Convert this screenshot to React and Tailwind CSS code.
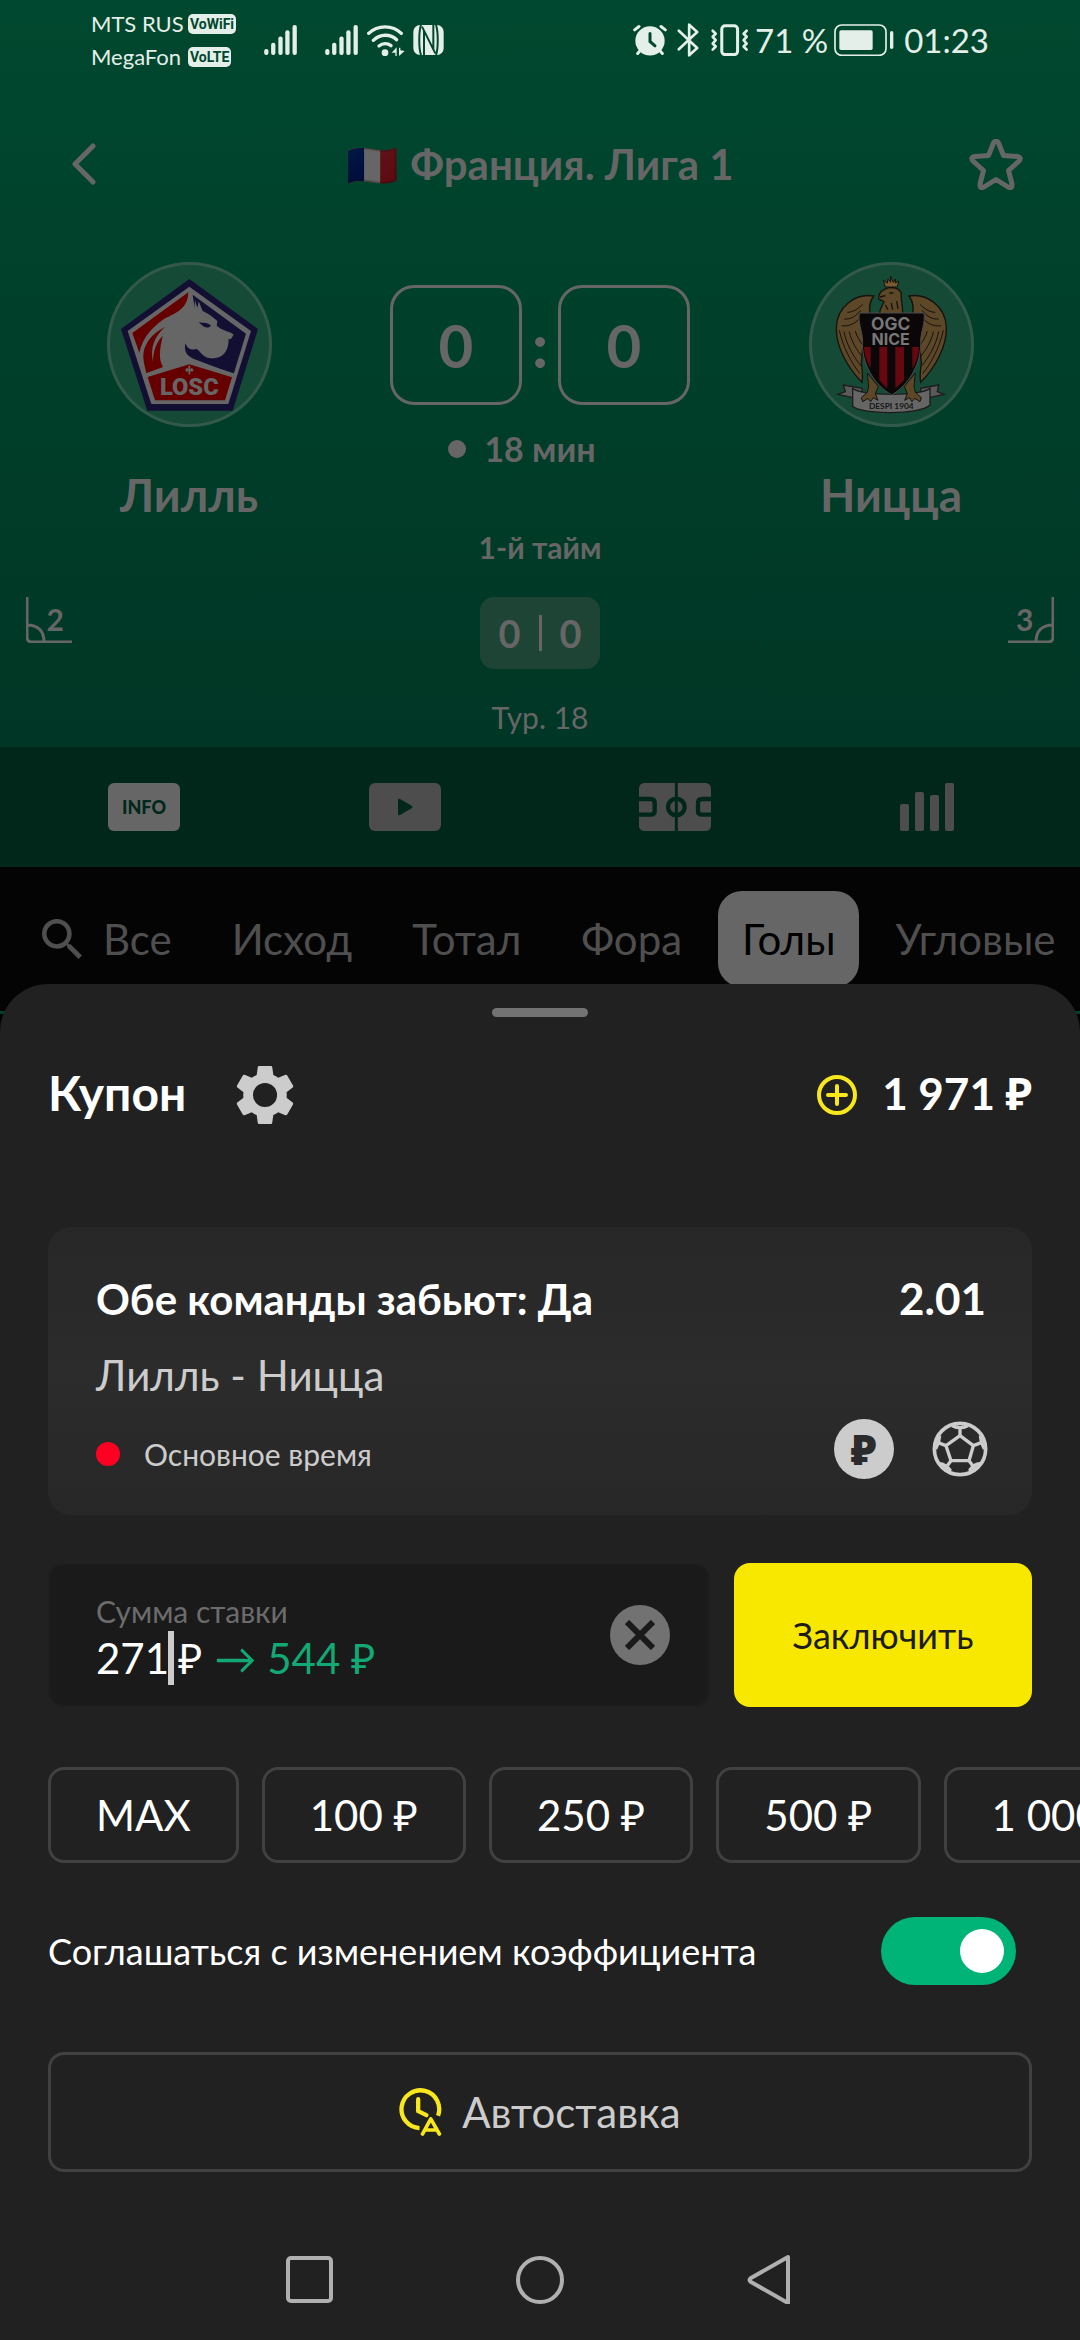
import { useState } from 'react';

const TABS = ['Исход', 'Тотал', 'Фора', 'Голы', 'Угловые'];
const AMOUNTS = ['MAX', '100 ₽', '250 ₽', '500 ₽', '1 000 ₽'];

const Signal = () => (
    <svg className="w-[33px] h-[30px]" viewBox="611 74 99 91" fill="currentColor">
        <rect x="611" y="147" width="13" height="18" rx="6" />
        <rect x="632" y="128" width="13" height="37" rx="6" />
        <rect x="654" y="109" width="13" height="56" rx="6" />
        <rect x="675" y="90" width="13" height="75" rx="6" />
        <rect x="697" y="74" width="13" height="91" rx="6" />
    </svg>
);

const NetworkBadge = ({ children }) => (
    <span className="justify-self-start rounded-[5px] bg-[#e4efe9] px-[2px] text-[14px] leading-5 font-bold text-[#00472e] font-['Roboto',sans-serif]">{children}</span>
);

const StatusBar = () => (
    <div className="flex items-center justify-between h-20 px-[91px] text-[#e4efe9]">
        <div className="flex items-center">
            <div className="grid grid-cols-[97px_76px] items-center text-[22px] leading-[33px]">
                <span className="whitespace-nowrap">MTS RUS</span>
                <NetworkBadge>VoWiFi</NetworkBadge>
                <span>MegaFon</span>
                <NetworkBadge>VoLTE</NetworkBadge>
            </div>
            <Signal />
            <div className="w-7" />
            <Signal />
            {/* Wi-Fi with traffic arrows */}
            <svg className="w-[38px] h-[31px] ml-[9px]" viewBox="921 73 114 93" fill="none" stroke="currentColor" strokeWidth="10" strokeLinecap="round">
                <path d="M926 98 C953 72 998 72 1024 98" />
                <path d="M940 119 C960 99 991 99 1010 117" />
                <path d="M957 136 C968 127 983 127 993 135" />
                <circle cx="975" cy="156" r="10" fill="currentColor" stroke="none" />
                <path d="M1010 140 V166 H1006 V156 H995 Z M1017 166 V141 H1021 V149 L1034 151 Z" fill="currentColor" stroke="none" />
            </svg>
            {/* NFC */}
            <svg className="w-[31px] h-[30px] ml-2" viewBox="1057 75 91 90" fill="none" stroke="#00472e" strokeWidth="6">
                <rect x="1057" y="75" width="91" height="90" rx="20" fill="currentColor" className="text-[#e4efe9]" stroke="none" />
                <path d="M1080 75 C1073 95 1073 145 1080 165 M1125 75 C1132 95 1132 145 1125 165" />
                <path d="M1089 165 V92 L1117 148 V75 M1083 80 L1089 92 M1117 148 L1123 160" />
            </svg>
        </div>
        <div className="flex items-center text-[33px] leading-[42px]">
            {/* Alarm */}
            <svg className="w-[34px] h-8" viewBox="96 73 102 95" fill="none" stroke="currentColor" strokeWidth="9" strokeLinecap="round">
                <circle cx="147" cy="123" r="44" fill="currentColor" stroke="none" />
                <path d="M101 90 L114 80 M180 80 L193 90 M117 153 L110 161 M177 153 L184 161" />
                <path d="M147 101 V125 L162 138" stroke="#00472e" />
            </svg>
            {/* Bluetooth */}
            <svg className="w-[22px] h-[34px] ml-[10px]" viewBox="229 69 65 102" fill="none" stroke="currentColor" strokeWidth="8" strokeLinejoin="round" strokeLinecap="round">
                <path d="M234 92 L289 144 L265 166 V74 L289 96 L234 148" />
            </svg>
            {/* Vibration */}
            <svg className="w-[39px] h-8 ml-[11px]" viewBox="326 72 116 95" fill="none" stroke="currentColor" strokeWidth="9" strokeLinejoin="round" strokeLinecap="round">
                <rect x="361" y="77" width="47" height="86" rx="10" />
                <path d="M334 92 L343 101 L334 110 L343 120 L334 130 L343 139 L334 148" strokeWidth="8" />
                <path d="M435 92 L426 101 L435 110 L426 120 L435 130 L426 139 L435 148" strokeWidth="8" />
            </svg>
            <span className="ml-[6px] whitespace-nowrap">71 %</span>
            <svg className="w-[60px] h-8 ml-[6px]" viewBox="704 73 180 96" fill="none" stroke="currentColor">
                <rect x="707" y="76" width="153" height="91" rx="20" strokeWidth="5" />
                <rect x="720" y="92" width="100" height="59" rx="5" fill="currentColor" stroke="none" />
                <path d="M877 99 V143" strokeWidth="10" strokeLinecap="round" />
            </svg>
            <span className="ml-[10px]">01:23</span>
        </div>
    </div>
);

const LilleLogo = () => (
    <svg className="w-full h-full" viewBox="81 67 495 495" role="img" aria-label="Лилль">
        <path d="M328 118 L534 268 L458 513 H202 L123 268 Z" fill="#120f33" />
        <path d="M328 141 L513 274 L445 493 H214 L143 274 Z" fill="#666" />
        <path d="M325 158 L157 280 L178 340 C188 292 218 262 252 238 C290 220 324 206 325 158 Z" fill="#660000" />
        <path d="M256 261 C212 282 188 320 190 352 C191 372 196 386 199 401 L249 382 C234 356 240 326 248 288 C228 310 220 332 219 366 C210 326 222 290 256 261 Z" fill="#660000" />
        <path d="M338 165 L498 282 L461 403 L340 357 C322 350 311 336 316 311 C320 322 330 334 346 328 C360 328 364 354 392 356 C424 358 446 340 446 298 L453 298 L461 285 C450 274 428 274 410 258 L412 244 C398 232 384 221 368 214 L356 186 L352 210 L344 206 Z" fill="#120f33" />
        <path d="M345 182 L343 208 L366 214 L357 188 L352 204 Z" fill="#666" />
        <path d="M356 247 C370 252 382 246 393 258 C386 267 372 266 356 247 Z" fill="#120f33" />
        <path d="M328 374 L456 413 L435 482 H225 L203 412 Z" fill="#660000" />
        <path d="M199 406 L328 364 L462 406" fill="none" stroke="#666" strokeWidth="10" />
        <path d="M328 378 V404 M316 391 H340 M321 386 V396 M335 386 V396" fill="none" stroke="#666" strokeWidth="5" />
        <text x="328" y="466" textAnchor="middle" fontSize="71" fontWeight="900" fill="#666" fontFamily="Roboto, sans-serif">LOSC</text>
    </svg>
);

const Wing = () => (
    <g stroke="#17110b" strokeWidth="4" fill="#5c4729">
        <path d="M641 169 C588 160 530 200 529 265 C528 320 562 384 606 428 C610 405 606 388 604 370 L612 280 L600 222 H630 C626 200 630 184 641 169 Z" />
        <path d="M538 272 C548 320 575 372 600 402 M552 276 C560 318 582 352 602 378 M568 276 C574 306 590 330 606 350 M586 274 C590 290 600 306 610 318 M545 258 C566 262 590 250 602 232 M552 238 C572 240 590 228 602 212 M562 218 C580 218 596 206 608 194" fill="none" strokeWidth="3" />
    </g>
);

const NiceLogo = () => (
    <svg className="w-full h-full" viewBox="447 67 495 495" role="img" aria-label="Ницца">
        {/* Ribbon */}
        <path d="M550 436 L606 446 V476 L578 474 L534 464 L556 456 Z M836 436 L782 446 V476 L808 474 L852 464 L832 456 Z" fill="#5a5a5a" stroke="#1c1c1c" strokeWidth="4" />
        <path d="M578 446 C606 470 782 470 810 446 V496 C782 526 606 526 578 500 Z" fill="#666" stroke="#1c1c1c" strokeWidth="4" />
        {/* Legs */}
        <path d="M622 400 L655 440 L646 462 L654 482 L640 474 L632 486 L624 476 L608 486 L604 474 L622 458 L626 440 Z M766 400 L733 440 L742 462 L734 482 L748 474 L756 486 L764 476 L780 486 L784 474 L766 458 L762 440 Z" fill="#5c4729" stroke="#17110b" strokeWidth="3" />
        <Wing />
        <g transform="matrix(-1 0 0 1 1388 0)">
            <Wing />
        </g>
        {/* Head and crown */}
        <path d="M658 222 C660 206 668 196 672 186 L656 178 C654 164 664 152 676 148 C696 138 722 146 724 164 C722 178 728 196 728 222 Z" fill="#5c4729" stroke="#17110b" strokeWidth="4" />
        <path d="M660 172 L676 168 M688 160 H700 M676 196 L684 210 M694 190 L698 210 M710 184 L714 208" fill="none" stroke="#17110b" strokeWidth="4" />
        <path d="M676 142 L670 122 L682 130 L684 118 L692 128 V110 L700 128 L706 118 L706 130 L716 124 L712 142 Z" fill="#7a5a30" stroke="#17110b" strokeWidth="3" />
        {/* Shield */}
        <path d="M598 220 H792 C796 250 784 274 782 300 C786 372 746 436 695 466 C644 436 602 372 608 300 C606 274 594 250 598 220 Z" fill="#0b0708" stroke="#4a4a4a" strokeWidth="3" />
        <path d="M612 322 H632 V386 C620 366 613 346 612 322 Z M658 322 H682 V446 C673 438 665 430 658 421 Z M706 322 H732 V421 C724 430 716 438 706 445 Z M757 322 H777 C776 346 769 368 757 388 Z" fill="#660810" />
        <text x="692" y="271" textAnchor="middle" fontSize="52" fontWeight="700" fill="#777" fontFamily="Inter, sans-serif">OGC</text>
        <text x="692" y="316" textAnchor="middle" fontSize="48" fontWeight="700" fill="#777" fontFamily="Inter, sans-serif">NICE</text>
        <text x="694" y="507" textAnchor="middle" fontSize="25" fontWeight="700" fill="#151515" fontFamily="Lato, sans-serif">DESPI 1904</text>
    </svg>
);

const Corner = () => (
    <svg className="w-full h-full" viewBox="0 0 46 46" fill="none" stroke="currentColor" strokeWidth="3">
        <path d="M1 0 V40 Q1 45 6 45 H46 M1 28 C12 28 18 34 18 45" />
    </svg>
);

const Team = ({ name, corners, logo, flip }) => (
    <div className="flex flex-col items-center">
        <div className="w-[165px] h-[165px] rounded-full bg-[#154a37] outline-3 -outline-offset-3 outline-[#33594a]">
            {logo}
        </div>
        <p className="mt-10 text-[46px] leading-[56px] font-bold">{name}</p>
        <div className={flip ? 'relative mt-[74px] mr-[26px] self-end w-[46px] h-[46px]' : 'relative mt-[74px] ml-[26px] self-start w-[46px] h-[46px]'}>
            <div className={flip ? 'absolute inset-0 -scale-x-100' : 'absolute inset-0'}>
                <Corner />
            </div>
            <span className={flip ? 'absolute left-2 top-1 text-[30px] leading-9 font-bold' : 'absolute right-2 top-1 text-[30px] leading-9 font-bold'}>{corners}</span>
        </div>
    </div>
);

const ScoreBox = ({ value }) => (
    <span className="flex items-center justify-center w-[132px] h-[120px] rounded-3xl border-3 border-[#666] text-[60px] leading-[60px] font-bold">{value}</span>
);

const MatchHeader = () => (
    <header className="bg-linear-to-b from-[#00482f] to-[#003625] text-[#666]">
        <StatusBar />
        <div className="flex items-center justify-between h-12 mt-[60px] px-[57px]">
            <button aria-label="Назад" className="w-[54px] pl-[15px]">
                <svg className="w-6 h-[42px]" viewBox="0 0 24 42" fill="none" stroke="currentColor" strokeWidth="5" strokeLinecap="round" strokeLinejoin="round">
                    <path d="M21 3 L3 21 L21 39" />
                </svg>
            </button>
            <h1 className="flex items-center gap-3 text-[42px] leading-[48px] font-bold">
                <span className="brightness-40">🇫🇷</span>
                Франция. Лига 1
            </h1>
            <button aria-label="В избранное">
                <svg className="w-[54px] h-[51px]" viewBox="0 0 54 51" fill="none" stroke="currentColor" strokeWidth="5" strokeLinejoin="round">
                    <path d="M24.5 4 Q27 0 29.500 4 L34.500 16.500 L48.500 17.500 Q53 18.500 50 22 L39.500 31.500 L43 45 Q43.500 50 39 48 L27 40.500 L15 48 Q10.500 50 11 45 L14.500 31.500 L4 22 Q1 18.500 5.500 17.500 L19.500 16.500 Z" />
                </svg>
            </button>
        </div>

        <div className="grid grid-cols-[7fr_6fr_7fr] pt-[74px] pb-3">
            <Team name="Лилль" corners="2" logo={<LilleLogo />} />
            <div className="flex flex-col items-center pt-[23px]">
                <div className="flex items-center">
                    <ScoreBox value="0" />
                    <span className="w-9 text-center text-[60px] leading-[60px] font-black">:</span>
                    <ScoreBox value="0" />
                </div>
                <p className="flex items-center gap-[18px] mt-[22px] pr-9 text-[34px] leading-[44px] font-bold">
                    <span className="w-[18px] h-[18px] rounded-full bg-[#666]" />
                    18 мин
                </p>
                <p className="mt-[58px] text-[30px] leading-9 font-bold">1-й тайм</p>
                <div className="flex items-center gap-[18px] mt-8 h-[72px] px-[18px] rounded-[14px] bg-[#1e4436] text-[38px] leading-9 font-bold">
                    <span>0</span>
                    <span className="w-[3px] h-9 bg-[#666]" />
                    <span>0</span>
                </div>
                <p className="mt-[30px] text-[30px] leading-9">Тур. 18</p>
            </div>
            <Team name="Ницца" corners="3" logo={<NiceLogo />} flip />
        </div>
    </header>
);

const MediaBar = () => (
    <nav className="grid grid-cols-2 h-[120px] bg-[#00271a] text-[#4d4d4d]">
        <div className="flex items-center justify-between pl-[108px] pr-[99px]">
            <button className="w-[72px] h-12 rounded-md bg-[#666] text-[18px] leading-5 font-black text-[#00271a]">INFO</button>
            <button aria-label="Видео" className="flex items-center justify-center w-[72px] h-12 rounded-md bg-[#4d4d4d]">
                <svg className="w-[18px] h-[18px]" viewBox="0 0 18 18" fill="#00271a">
                    <path d="M2 2 Q2 0 4 1 L16 8 Q17 9 16 10 L4 17 Q2 18 2 16 Z" />
                </svg>
            </button>
        </div>
        <div className="flex items-center justify-between pl-[99px] pr-[126px]">
            <button aria-label="Поле">
                <svg className="w-[72px] h-12" viewBox="27 39 216 144">
                    <rect x="27" y="39" width="216" height="144" rx="16" fill="currentColor" />
                    <g fill="none" stroke="#00271a">
                        <path d="M27 87 H62 Q74 87 74 99 V123 Q74 134 62 134 H27 M243 87 H216 Q204 87 204 99 V123 Q204 134 216 134 H243" strokeWidth="13" />
                        <path d="M139 39 V183" strokeWidth="9" />
                        <circle cx="139" cy="111" r="25" strokeWidth="13" />
                    </g>
                </svg>
            </button>
            <button aria-label="Статистика">
                <svg className="w-[54px] h-12" viewBox="0 0 54 48" fill="currentColor">
                    <rect y="21" width="9" height="27" rx="2" />
                    <rect x="15" y="9" width="9" height="39" rx="2" />
                    <rect x="30" y="12" width="9" height="36" rx="2" />
                    <rect x="45" width="9" height="48" rx="2" />
                </svg>
            </button>
        </div>
    </nav>
);

const MarketTabs = () => {
    const [active, setActive] = useState('Голы');

    return (
        <div className="flex gap-3 h-[147px] pt-6 pl-[42px] border-b-3 border-[#00402b] bg-[#040404] overflow-hidden text-[42px] leading-[48px] text-[#4f4f4f]">
            <button className="flex items-center gap-[21px] h-24 pr-6 shrink-0">
                <svg className="w-10 h-10" viewBox="3 3 17.5 17.5" fill="currentColor">
                    <path d="M15.5 14h-.79l-.28-.27C15.41 12.59 16 11.11 16 9.5 16 5.91 13.09 3 9.5 3S3 5.91 3 9.5 5.91 16 9.5 16c1.61 0 3.09-.59 4.23-1.57l.27.28v.79l5 4.99L20.49 19l-4.99-5zm-6 0C7.01 14 5 11.99 5 9.5S7.01 5 9.5 5 14 7.01 14 9.5 11.99 14 9.5 14z" />
                </svg>
                Все
            </button>
            {TABS.map((tab) => (
                <button
                    key={tab}
                    onClick={() => setActive(tab)}
                    className={tab === active ? 'h-24 px-6 shrink-0 rounded-3xl bg-[#666] text-black' : 'h-24 px-6 shrink-0'}
                >
                    {tab}
                </button>
            ))}
        </div>
    );
};

const BetCard = () => (
    <article className="mt-[102px] mx-12 pt-[45px] pb-9 pl-12 pr-[42px] rounded-3xl bg-linear-to-b from-[#272727] via-[#2c2c2c] to-[#272727]">
        <div className="flex items-baseline justify-between h-[51px] font-bold">
            <h3 className="text-[42px] leading-[54px]">Обе команды забьют: Да</h3>
            <span className="pr-1 text-[44px] leading-[48px]">2.01</span>
        </div>
        <p className="mt-7 text-[42px] leading-[48px] text-[#ccc]">Лилль - Ницца</p>
        <div className="flex items-center justify-between mt-5">
            <p className="flex items-center gap-6 pt-[10px] text-[30px] leading-9 text-[#ccc]">
                <span className="w-6 h-6 rounded-full bg-[#ff0022]" />
                Основное время
            </p>
            <div className="flex items-center gap-9">
                <span className="flex items-center justify-center w-[60px] h-[60px] rounded-full bg-[#ccc] text-[42px] leading-[48px] font-black text-[#2b2b2b]">₽</span>
                <svg className="w-[60px] h-[60px]" viewBox="330 42 180 180" fill="none" stroke="#ccc" strokeWidth="10" strokeLinejoin="round">
                    <circle cx="420" cy="132" r="77" strokeWidth="11" />
                    <path d="M420 92 L460 122 L447 167 H393 L378 122 Z" />
                    <path d="M420 92 V66 M460 122 L486 112 M447 167 L464 190 M393 167 L376 190 M378 122 L352 112" />
                    <path d="M397 62 Q420 74 443 62 M481 92 Q482 112 493 132 M480 176 Q462 176 448 198 M392 198 Q378 178 360 176 M347 132 Q358 112 359 92" />
                </svg>
            </div>
        </div>
    </article>
);

const StakeForm = () => {
    const [stake, setStake] = useState('271');

    return (
        <div className="flex gap-6 mt-12 mx-12">
            <div className="flex flex-1 items-center justify-between h-36 pl-[46px] pr-[38px] rounded-2xl border-2 border-[#1e1e1e] bg-[#1a1a1a]">
                <div className="pt-2">
                    <label htmlFor="stake" className="block text-[30px] leading-9 text-[#6c6c6c]">Сумма ставки</label>
                    <div className="flex items-center mt-[2px] text-[42px] leading-[54px]">
                        <input
                            id="stake"
                            value={stake}
                            onChange={(e) => setStake(e.target.value)}
                            className="w-[72px] h-[54px] bg-transparent text-white outline-none"
                        />
                        <span className="w-[6px] h-[54px] bg-[#ccc]" />
                        <span className="ml-1">₽</span>
                        <span className="ml-3 text-[#12a975]">→ 544 ₽</span>
                    </div>
                </div>
                <button aria-label="Очистить" onClick={() => setStake('')} className="flex items-center justify-center w-[60px] h-[60px] rounded-full bg-[#727272]">
                    <svg className="w-[30px] h-[30px]" viewBox="0 0 30 30" fill="none" stroke="#1a1a1a" strokeWidth="6">
                        <path d="M2 2 L28 28 M28 2 L2 28" />
                    </svg>
                </button>
            </div>
            <button className="w-[298px] h-36 rounded-2xl bg-[#f8e800] text-[36px] leading-[44px] text-[#1c1c1c]">Заключить</button>
        </div>
    );
};

const Coupon = () => (
    <section className="relative flex-1 -mt-[30px] pt-6 rounded-t-[48px] bg-[#212121] text-white overflow-hidden">
        <div className="w-24 h-[9px] mx-auto rounded-full bg-[#737373]" />

        <div className="flex items-center justify-between h-[60px] mt-12 px-12">
            <div className="flex items-center gap-[50px]">
                <h2 className="pb-1 text-[48px] leading-[54px] font-bold">Купон</h2>
                <button aria-label="Настройки">
                    <svg className="w-[58px] h-[58px]" viewBox="2.4 2.4 19.2 19.2" fill="#ccc">
                        <path d="M19.14 12.94c.04-.3.06-.61.06-.94 0-.32-.02-.64-.07-.94l2.03-1.58c.18-.14.23-.41.12-.61l-1.92-3.32c-.12-.22-.37-.29-.59-.22l-2.39.96c-.5-.38-1.03-.7-1.62-.94l-.36-2.540c-.04-.24-.24-.41-.48-.41h-3.84c-.24 0-.43.17-.47.41l-.36 2.540c-.59.24-1.13.57-1.62.94l-2.39-.96c-.22-.08-.47 0-.59.22L2.74 8.870c-.12.21-.08.47.12.61l2.03 1.580c-.05.3-.09.63-.09.94s.02.64.07.94l-2.03 1.580c-.18.14-.23.41-.12.61l1.920 3.320c.12.22.37.29.59.22l2.39-.96c.5.38 1.030.7 1.620.94l.36 2.540c.05.24.24.41.48.41h3.840c.24 0 .44-.17.47-.41l.36-2.540c.59-.24 1.130-.56 1.620-.94l2.390.96c.22.08.47 0 .59-.22l1.920-3.320c.12-.22.07-.47-.12-.61l-2.010-1.580zM12 16a4 4 0 1 1 0-8 4 4 0 0 1 0 8z" />
                    </svg>
                </button>
            </div>
            <div className="flex items-center gap-6">
                <button aria-label="Пополнить">
                    <svg className="w-[42px] h-[42px]" viewBox="0 0 42 42" fill="none" stroke="#f8e71c" strokeWidth="4" strokeLinecap="round">
                        <circle cx="21" cy="21" r="18" />
                        <path d="M21 12 V30 M12 21 H30" />
                    </svg>
                </button>
                <span className="pb-1 text-[44px] leading-[54px] font-bold">1 971 ₽</span>
            </div>
        </div>

        <BetCard />
        <StakeForm />

        <div className="flex gap-[23px] mt-[60px] pl-12">
            {AMOUNTS.map((amount) => (
                <button key={amount} className="h-24 px-[45px] shrink-0 rounded-2xl border-3 border-[#414141] text-[42px] leading-[48px]">{amount}</button>
            ))}
        </div>

        <div className="flex items-center justify-between mt-[54px] pl-12 pr-16 text-[36px] leading-[44px]">
            <label htmlFor="agree">Соглашаться с изменением коэффициента</label>
            <input
                id="agree"
                type="checkbox"
                defaultChecked
                className="flex items-center w-[135px] h-[68px] px-3 rounded-full appearance-none bg-[#555] checked:justify-end checked:bg-[#00b377] before:w-11 before:h-11 before:rounded-full before:bg-white"
            />
        </div>

        <div className="mt-[67px] px-12">
            <button className="flex items-center justify-center gap-5 w-full h-[120px] rounded-2xl border-3 border-[#414141] text-[42px] leading-[48px] text-[#ccc]">
                <svg className="w-[43px] h-12" viewBox="29 53 128 145" fill="none" stroke="#f8e71c" strokeWidth="13" strokeLinecap="round" strokeLinejoin="round">
                    <path d="M90 174 A57 57 0 1 1 146 137" strokeLinecap="butt" />
                    <path d="M86 87 V123 L111 135" />
                    <path d="M99 192 L124 146 L150 192 M107 180 H142" strokeWidth="11" />
                </svg>
                Автоставка
            </button>
        </div>

        <nav className="flex justify-center gap-[180px] mt-[82px] pb-9">
            <button aria-label="Недавние">
                <svg className="w-[50px] h-[50px]" viewBox="0 0 50 50" fill="none" stroke="#b0b0b0" strokeWidth="4">
                    <rect x="3" y="4" width="43" height="43" rx="3" />
                </svg>
            </button>
            <button aria-label="Домой">
                <svg className="w-[50px] h-[50px]" viewBox="0 0 50 50" fill="none" stroke="#b0b0b0" strokeWidth="4">
                    <circle cx="25" cy="26" r="22" />
                </svg>
            </button>
            <button aria-label="Назад">
                <svg className="w-[50px] h-[50px]" viewBox="0 0 50 50" fill="none" stroke="#b0b0b0" strokeWidth="4" strokeLinejoin="round">
                    <path d="M43 3 V49 L6 28 Q3 26 6 24 Z" />
                </svg>
            </button>
        </nav>
    </section>
);

export default function App() {
    return (
        <main className="flex flex-col min-h-screen bg-[#040404] overflow-hidden font-['Lato','Noto_Sans',sans-serif]">
            <MatchHeader />
            <MediaBar />
            <MarketTabs />
            <Coupon />
        </main>
    );
}
